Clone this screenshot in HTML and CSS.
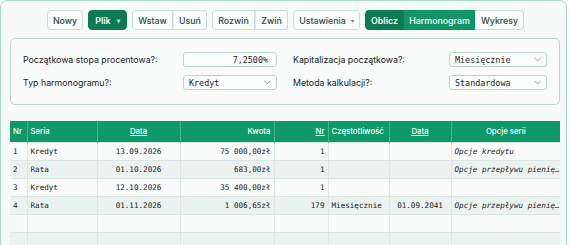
FILE: index.html
```html
<!DOCTYPE html>
<html lang="pl">
<head>
<meta charset="utf-8">
<link rel="stylesheet" href="styles.css">
</head>
<body>
<div class="app">
  <div class="toolbar">
    <button class="btn w-nowy">Nowy</button>
    <button class="btn primary w-plik">Plik <span class="caret">▾</span></button>
    <div class="group">
      <button class="btn w-wstaw">Wstaw</button>
      <button class="btn w-usun">Usuń</button>
    </div>
    <div class="group">
      <button class="btn w-rozwin">Rozwiń</button>
      <button class="btn w-zwin">Zwiń</button>
    </div>
    <button class="btn w-ust">Ustawienia <span class="caret dark">▾</span></button>
    <div class="group">
      <button class="btn primary w-oblicz">Oblicz</button>
      <button class="btn active w-harm">Harmonogram</button>
      <button class="btn w-wyk">Wykresy</button>
    </div>
  </div>

  <div class="panel">
    <div class="field">
      <span class="label">Początkowa stopa procentowa?:</span>
      <div class="input num">7,2500%</div>
    </div>
    <div class="field">
      <span class="label">Kapitalizacja początkowa?:</span>
      <div class="input select wide">Miesięcznie<svg class="chev" viewBox="0 0 8 5" width="7" height="5"><polyline points="0.5,0.5 4,4 7.5,0.5" fill="none" stroke="#7a8a85" stroke-width="1"/></svg></div>
    </div>
    <div class="field">
      <span class="label">Typ harmonogramu?:</span>
      <div class="input select">Kredyt<svg class="chev" viewBox="0 0 8 5" width="7" height="5"><polyline points="0.5,0.5 4,4 7.5,0.5" fill="none" stroke="#7a8a85" stroke-width="1"/></svg></div>
    </div>
    <div class="field">
      <span class="label">Metoda kalkulacji?:</span>
      <div class="input select wide">Standardowa<svg class="chev" viewBox="0 0 8 5" width="7" height="5"><polyline points="0.5,0.5 4,4 7.5,0.5" fill="none" stroke="#7a8a85" stroke-width="1"/></svg></div>
    </div>
  </div>

  <table class="grid">
    <colgroup>
      <col class="c1"><col class="c2"><col class="c3"><col class="c4"><col class="c5"><col class="c6"><col class="c7"><col class="c8">
    </colgroup>
    <thead>
      <tr>
        <th class="l">Nr</th>
        <th class="l">Seria</th>
        <th class="c"><u>Data</u></th>
        <th class="r">Kwota</th>
        <th class="r"><u>Nr</u></th>
        <th class="l">Częstotliwość</th>
        <th class="c"><u>Data</u></th>
        <th class="c">Opcje serii</th>
      </tr>
    </thead>
    <tbody>
      <tr><td class="l">1</td><td class="l">Kredyt</td><td class="c">13.09.2026</td><td class="r">75 000,00zł</td><td class="r">1</td><td></td><td></td><td class="l it">Opcje kredytu</td></tr>
      <tr><td class="l">2</td><td class="l">Rata</td><td class="c">01.10.2026</td><td class="r">683,00zł</td><td class="r">1</td><td></td><td></td><td class="l it">Opcje przepływu pienię…</td></tr>
      <tr><td class="l">3</td><td class="l">Kredyt</td><td class="c">12.10.2026</td><td class="r">35 400,00zł</td><td class="r">1</td><td></td><td></td><td></td></tr>
      <tr><td class="l">4</td><td class="l">Rata</td><td class="c">01.11.2026</td><td class="r">1 006,65zł</td><td class="r">179</td><td class="l">Miesięcznie</td><td class="c">01.09.2041</td><td class="l it">Opcje przepływu pienię…</td></tr>
      <tr><td></td><td></td><td></td><td></td><td></td><td></td><td></td><td></td></tr>
      <tr><td></td><td></td><td></td><td></td><td></td><td></td><td></td><td></td></tr>
    </tbody>
  </table>
</div>
</body>
</html>
```

FILE: styles.css
```css
* { box-sizing: border-box; }
html, body { margin: 0; padding: 0; background: #ffffff; }
body {
  font-family: Inter, "Liberation Sans", sans-serif;
  color: #222;
  overflow: hidden;
  height: 245px;
}
.app {
  width: 567px;
  height: 300px;
  border: 1px solid #a9dcc6;
  border-radius: 7px;
  background: #f6faf9;
  padding: 0 6px 0 9px;
}
.toolbar {
  display: flex;
  align-items: center;
  gap: 5px;
  padding: 9px 0 0 37px;
  height: 29px;
}
.group { display: flex; }
.btn {
  height: 20px;
  padding: 0;
  border: 1px solid #c8ded6;
  background: #fbfdfc;
  color: #2d4a40;
  font-family: Inter, "Liberation Sans", sans-serif;
  font-size: 8.8px;
  font-weight: 500;
  border-radius: 4px;
  display: flex;
  align-items: center;
  justify-content: center;
  white-space: nowrap;
}
.group .btn { border-radius: 0; }
.group .btn:first-child { border-radius: 4px 0 0 4px; }
.group .btn:last-child { border-radius: 0 4px 4px 0; }
.group .btn + .btn { border-left: 1px solid #dfe9e5; }
.btn.primary {
  background: #0c7a53;
  border-color: #0c7a53;
  color: #fff;
  font-weight: 600;
}
.btn.active {
  background: #119467;
  border-color: #119467;
  color: #fff;
  font-weight: 500;
}
.group .btn.active { border-left-color: #119467; }
.caret { font-size: 6px; margin-left: 6px; }
.caret.dark { color: #778; margin-left: 5px; }
.w-nowy { width: 36px; }
.w-plik { width: 39px; }
.w-wstaw { width: 41px; }
.w-usun { width: 34px; }
.w-rozwin { width: 43px; }
.w-zwin { width: 33px; }
.w-ust { width: 67px; }
.w-oblicz { width: 39px; }
.w-harm { width: 71px; }
.w-wyk { width: 49px; }

.panel {
  margin-top: 8px;
  width: 550px;
  height: 67px;
  border: 1px solid #b9dccf;
  border-radius: 5px;
  background: #f9fcfb;
  padding: 13px 12px 0 12px;
  display: grid;
  grid-template-columns: 254px 254px;
  align-content: start;
  column-gap: 16px;
  row-gap: 8px;
}
.field {
  display: flex;
  align-items: center;
  justify-content: space-between;
  height: 15px;
}
.label {
  font-size: 8.8px;
  color: #222;
}
.input {
  width: 94px;
  height: 15px;
  border: 1px solid #b3d6c8;
  border-radius: 3px;
  background: #fdfefe;
  font-family: "DejaVu Sans Mono", "Liberation Mono", monospace;
  font-size: 8.4px;
  color: #222;
  display: flex;
  align-items: center;
  padding: 0 5px;
}
.input.wide { width: 98px; }
.input.num { justify-content: flex-end; padding-right: 8px; }
.input.select { justify-content: space-between; }
.chev { display: block; }

.grid {
  margin-top: 16px;
  width: 550px;
  border-collapse: collapse;
  table-layout: fixed;
  font-family: "DejaVu Sans Mono", "Liberation Mono", monospace;
  font-size: 7.6px;
  color: #222;
}
.c1 { width: 17px; } .c2 { width: 70px; } .c3 { width: 83px; } .c4 { width: 94px; }
.c5 { width: 54px; } .c6 { width: 61px; } .c7 { width: 62px; } .c8 { width: 109px; }
.grid th {
  height: 21px;
  background: #0f986a;
  color: #fff;
  font-family: Inter, "Liberation Sans", sans-serif;
  font-size: 7.8px;
  font-weight: 500;
  border-left: 1px solid #47b48c;
  padding: 0 3px;
  white-space: nowrap;
}
.grid th:first-child { border-left: none; }
.grid td {
  height: 18px;
  border-left: 1px solid #dbe7e3;
  border-top: 1px solid #dbe7e3;
  padding: 0 3px;
  white-space: nowrap;
  overflow: hidden;
}
.grid td:first-child { border-left: none; }
.grid tbody tr:nth-child(odd) td { background: #f8fbfa; }
.grid tbody tr:nth-child(even) td { background: #ebf3f0; }
.l { text-align: left; }
.r { text-align: right; }
.c { text-align: center; }
.it { font-style: italic; }
```
